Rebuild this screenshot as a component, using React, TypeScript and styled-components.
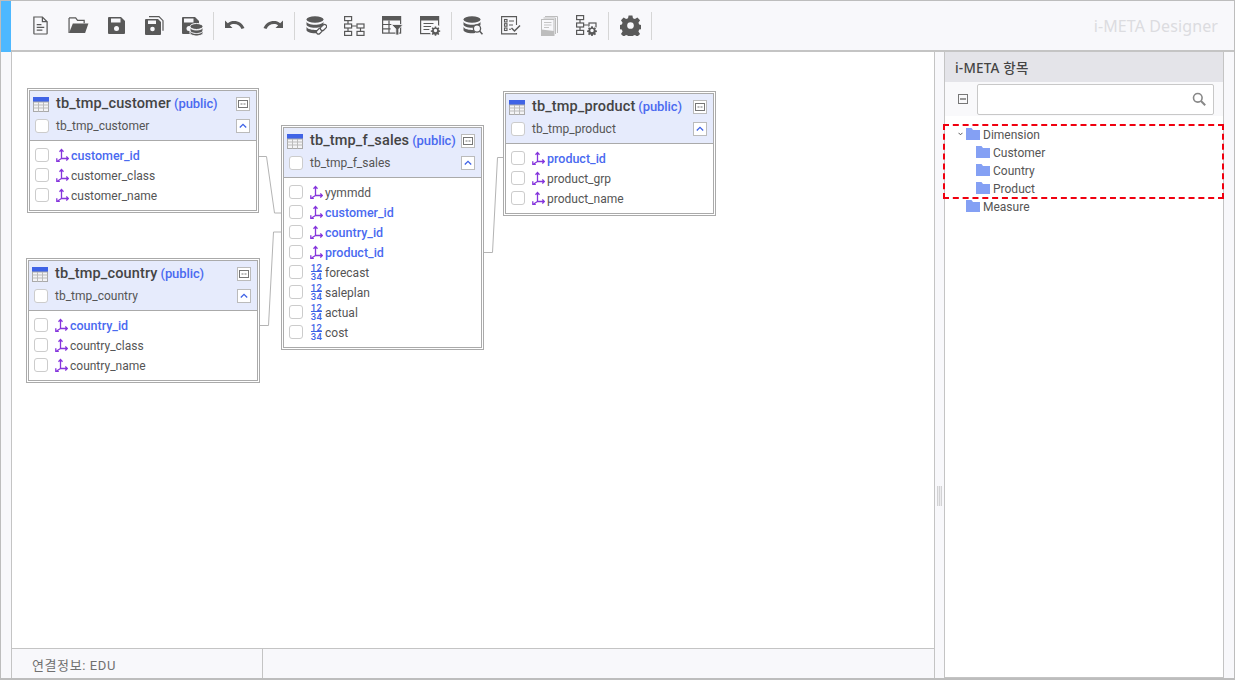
import React from "react";
import styled, { createGlobalStyle } from "styled-components";

const Global = createGlobalStyle`
  html, body { margin: 0; padding: 0; background: #fff; }
  body { font-family: Roboto, "Noto Sans CJK KR", "Noto Sans", sans-serif; font-size: 12px; color: #555; }
  * { box-sizing: border-box; }
`;

const Page = styled.div`
  width: 1235px;
  height: 680px;
  display: flex;
  flex-direction: column;
  background: #f8f8fb;
  border: 1px solid #bdbdbd;
  border-bottom-width: 2px;
  overflow: hidden;
`;

const Toolbar = styled.div`
  height: 51px;
  flex: none;
  display: flex;
  align-items: center;
  border-bottom: 2px solid #c4c4c4;
  position: relative;
  padding-right: 16px;
`;
const Accent = styled.div`
  width: 10px;
  align-self: stretch;
  margin: 0 8px -2px 0;
  background: #4db8ff;
  flex: none;
`;
const ToolGroup = styled.div`
  display: flex;
  align-items: center;
  height: 28px;
  padding: 0 2px;
  border-right: 1px solid #d6d6d6;
`;
const ToolButton = styled.div`
  width: 38px;
  height: 28px;
  display: flex;
  align-items: center;
  justify-content: center;
`;
const Brand = styled.div`
  margin-left: auto;
  font-family: "Noto Sans", sans-serif;
  font-size: 16px;
  color: #dcdce0;
  letter-spacing: 0.1px;
`;

const Body = styled.div`
  flex: 1;
  display: flex;
  min-height: 0;
`;
const Gutter = styled.div`
  width: 10px;
  flex: none;
`;
const Main = styled.div`
  width: 924px;
  flex: none;
  display: flex;
  flex-direction: column;
  border-left: 1px solid #c4c4c4;
  border-right: 1px solid #c4c4c4;
`;
const Canvas = styled.div`
  flex: 1;
  position: relative;
  background: #fff;
`;
const StatusBar = styled.div`
  height: 30px;
  flex: none;
  display: flex;
  border-top: 1px solid #c4c4c4;
  background: #f8f8fb;
`;
const StatusCell = styled.div`
  width: 251px;
  padding: 1px 0 0 20px;
  display: flex;
  align-items: center;
  font-size: 13px;
  letter-spacing: 0.6px;
  color: #707070;
  border-right: 1px solid #c4c4c4;
`;
const Splitter = styled.div`
  width: 9px;
  flex: none;
  display: flex;
  justify-content: center;
  padding-top: 434px;
`;
const Grip = styled.div`
  width: 5px;
  height: 20px;
  background: repeating-linear-gradient(90deg, #d2d2d4 0 1px, #ececee 1px 2px);
`;
const Side = styled.div`
  width: 280px;
  flex: none;
  position: relative;
  background: #fff;
  border: 1px solid #c4c4c4;
  border-top: none;
  display: flex;
  flex-direction: column;
`;
const SideHead = styled.div`
  height: 30px;
  flex: none;
  display: flex;
  align-items: center;
  padding-left: 10px;
  background: #e4e4e9;
  font-family: "Noto Sans", "Noto Sans CJK KR", sans-serif;
  font-size: 13.5px;
  font-weight: 500;
  letter-spacing: 0.2px;
  color: #444;
`;
const SearchRow = styled.div`
  height: 34px;
  flex: none;
  display: flex;
  align-items: center;
  padding: 0 9px 0 13px;
  gap: 9px;
  background: #f9f9fb;
`;
const Collapse = styled.div`
  width: 10px;
  height: 10px;
  border: 1px solid #777;
  position: relative;
  &::after {
    content: "";
    position: absolute;
    left: 1px;
    right: 1px;
    top: 3px;
    height: 2px;
    background: #777;
    transform: scaleY(0.75);
  }
`;
const SearchBox = styled.div`
  flex: 1;
  height: 31px;
  display: flex;
  align-items: center;
  justify-content: flex-end;
  padding-right: 7px;
  background: #fff;
  border: 1px solid #c8c8c8;
  border-radius: 2px;
`;
const Tree = styled.div`
  padding-top: 9px;
  display: flex;
  flex-direction: column;
`;
const TreeRow = styled.div<{ $indent: number }>`
  height: 18px;
  display: flex;
  align-items: center;
  gap: 3px;
  padding-left: ${(p) => p.$indent}px;
  color: #555;
`;
const TreeLabel = styled.span`
  padding-top: 2px;
`;
const Caret = styled.div`
  position: absolute;
  left: 9px;
  top: 73px;
  width: 12px;
  height: 18px;
  display: flex;
  align-items: center;
  justify-content: center;
`;
const Highlight = styled.div`
  position: absolute;
  left: -2px;
  right: -1px;
  top: 72px;
  height: 75px;
  border: 2px dashed #f0000f;
  pointer-events: none;
`;

const Node = styled.div<{ $x: number; $y: number; $w: number; $h: number }>`
  position: absolute;
  left: ${(p) => p.$x}px;
  top: ${(p) => p.$y}px;
  width: ${(p) => p.$w}px;
  height: ${(p) => p.$h}px;
  background: #fff;
  border: 3px double #aaa;
`;
const NodeHead = styled.div`
  height: 50px;
  padding: 2px 6px 0 3px;
  background: #e6ebfc;
  border-bottom: 1px solid #aaa;
  display: flex;
  flex-direction: column;
`;
const TitleRow = styled.div`
  height: 22px;
  display: flex;
  align-items: center;
`;
const Title = styled.div`
  margin-left: 7px;
  margin-top: -1px;
  font-size: 14.5px;
  font-weight: 500;
  letter-spacing: 0.13px;
  color: #444;
  white-space: nowrap;
`;
const Schema = styled.span`
  margin-left: 3px;
  font-size: 13px;
  color: #4a6af0;
  font-weight: 500;
  letter-spacing: -0.1px;
`;
const AliasRow = styled.div`
  height: 22px;
  display: flex;
  align-items: center;
  padding-left: 2px;
  color: #555;
`;
const AliasText = styled.span`
  margin-left: 7px;
`;
const SmallBtn = styled.div`
  margin-left: auto;
  width: 14px;
  height: 14px;
  flex: none;
  background: #fff;
  border: 1px solid #bbb;
  display: flex;
  align-items: center;
  justify-content: center;
`;
const Check = styled.div`
  width: 14px;
  height: 14px;
  flex: none;
  background: #fff;
  border: 1px solid #ccc;
  border-radius: 3px;
`;
const Rows = styled.div`
  padding: 4px 0 0 5px;
  display: flex;
  flex-direction: column;
`;
const Row = styled.div`
  height: 20px;
  display: flex;
  align-items: center;
`;
const RowIcon = styled.div`
  margin-left: 7px;
  width: 13px;
  height: 14px;
  flex: none;
  display: flex;
  align-items: center;
  justify-content: center;
`;
const RowName = styled.span<{ $key?: boolean }>`
  margin-left: 2px;
  padding-top: ${(p) => (p.$key ? 0 : 2)}px;
  color: ${(p) => (p.$key ? "#4a6af0" : "#555")};
  font-size: ${(p) => (p.$key ? 12.5 : 12)}px;
  font-weight: ${(p) => (p.$key ? 500 : 400)};
  white-space: nowrap;
`;
const NumGlyph = styled.div`
  display: flex;
  flex-direction: column;
  align-items: center;
  font-size: 9.5px;
  line-height: 7px;
  font-weight: 500;
  letter-spacing: 0.4px;
  color: #3f63e6;
  & > span:first-child {
    border-bottom: 1px solid #3f63e6;
    margin-bottom: 1px;
  }
`;
const Wires = styled.svg`
  position: absolute;
  left: 0;
  top: 0;
  width: 100%;
  height: 100%;
  pointer-events: none;
`;
const TableIcon = styled.svg`
  flex: none;
`;

const G = "#595959";

const DocLines = () => (
  <svg width="17" height="19" viewBox="0 0 18 20" fill="none" stroke={G} strokeWidth="1.3">
    <path d="M2 1h9l5 5v12.500a.5.5 0 0 1-.5.5h-13a.5.5 0 0 1-.5-.5V1.500z" />
    <path d="M11 1v5h5" />
    <path d="M5 9h5M5 12h8M5 15h6" />
  </svg>
);
const Folder = () => (
  <svg width="21" height="17" viewBox="0 0 22 18">
    <path d="M1 1h7l2 2.500h7v3" fill="none" stroke={G} strokeWidth="1.3" />
    <path d="M1 1v16" stroke={G} strokeWidth="1.3" />
    <path d="M5 7h16.500L18 17H1z" fill={G} />
  </svg>
);
const saveBody = "M1 2a1 1 0 0 1 1-1h12l4 4v12a1 1 0 0 1-1 1H2a1 1 0 0 1-1-1z";
const Save = () => (
  <svg width="19" height="19" viewBox="0 0 19 19">
    <path d={saveBody} fill={G} />
    <rect x="4" y="2.500" width="9.500" height="4" fill="#f8f8fb" />
    <circle cx="9.500" cy="12.500" r="2.500" fill="#f8f8fb" />
  </svg>
);
const SaveAll = () => (
  <svg width="20" height="19" viewBox="0 0 20 19">
    <path d="M5 .7h10l4 4v10" fill="none" stroke={G} strokeWidth="1.2" />
    <path d="M3 3h11l3 3v12a1 1 0 0 1-1 1H2a1 1 0 0 1-1-1V4a1 1 0 0 1 1-1z" fill={G} />
    <rect x="4" y="4.500" width="8" height="3.500" fill="#f8f8fb" />
    <circle cx="8.500" cy="13" r="2.300" fill="#f8f8fb" />
  </svg>
);
const SaveDb = () => (
  <svg width="22" height="20" viewBox="0 0 22 20">
    <path d={saveBody} fill={G} />
    <rect x="3" y="2.500" width="9.500" height="4" fill="#f8f8fb" />
    <circle cx="8" cy="12.500" r="2.500" fill="#f8f8fb" />
    <ellipse cx="15.500" cy="10.500" rx="6.500" ry="3" fill={G} stroke="#f8f8fb" />
    <path d="M9 11v6c0 1.600 3 3 6.500 3s6.500-1.400 6.500-3v-6c0 1.600-3 3-6.500 3S9 12.600 9 11z" fill={G} stroke="#f8f8fb" />
    <path d="M9 14.500c0 1.600 3 3 6.500 3s6.500-1.400 6.500-3" fill="none" stroke="#f8f8fb" />
  </svg>
);
const undoPath = "M0 .5v7.500h7.500L4.800 5.300C6 4.400 7.500 4 9 4c3.500 0 6 1.800 7.500 5l3-1C17.500 3.500 13.800 1 9 1 6.800 1 4.600 1.600 2.800 3.300z";
const Undo = () => (
  <svg width="20" height="12" viewBox="0 0 20 12">
    <path d={undoPath} fill={G} />
  </svg>
);
const Redo = () => (
  <svg width="20" height="12" viewBox="0 0 20 12">
    <path d={undoPath} fill={G} transform="matrix(-1 0 0 1 20 0)" />
  </svg>
);
const DbStack = () => (
  <>
    <ellipse cx="9" cy="3.500" rx="8.500" ry="3.200" fill={G} />
    <path d="M.5 5.500v3c0 1.800 3.800 3.200 8.500 3.200s8.500-1.400 8.500-3.200v-3C17.500 7.300 13.700 8.700 9 8.700S.5 7.300.5 5.500z" fill={G} />
    <path d="M.5 10.500v3.500c0 1.800 3.800 3.200 8.500 3.200 1 0 2-.1 3-.2V13.700c-1 .2-2 .2-3 .2-4.700 0-8.500-1.500-8.500-3.400z" fill={G} />
  </>
);
const DbLink = () => (
  <svg width="21" height="20" viewBox="0 0 21 20">
    <DbStack />
    <g fill="#f8f8fb" stroke={G} strokeWidth="1.2">
      <rect x="10" y="13" width="7" height="4" rx="2" transform="rotate(-45 13.500 15)" />
      <rect x="14" y="9.500" width="7" height="4" rx="2" transform="rotate(-45 17.500 11.500)" />
    </g>
  </svg>
);
const TreeBoxes = () => (
  <g fill="none" stroke={G} strokeWidth="1.2">
    <rect x=".6" y=".6" width="7" height="4" />
    <rect x=".6" y="8" width="7" height="4" />
    <rect x=".6" y="15.400" width="7" height="4" />
    <path d="M4 4.600V8M4 12v3.400M7.600 10h5" />
  </g>
);
const TreeIcon = () => (
  <svg width="21" height="20" viewBox="0 0 21 20">
    <TreeBoxes />
    <g fill="none" stroke={G} strokeWidth="1.2">
      <rect x="13" y="8" width="7" height="4" />
      <rect x="13" y="15.400" width="7" height="4" />
      <path d="M16.500 12v3.400" />
    </g>
  </svg>
);
const cogPath =
  "M-1.500-10h3l.5 2.600 1.700.7 2.200-1.500 2.100 2.100-1.500 2.200.7 1.700 2.600.5v3l-2.600.5-.7 1.700 1.500 2.200-2.100 2.100-2.200-1.500-1.700.7-.5 2.600h-3l-.5-2.600-1.700-.7-2.200 1.500-2.100-2.100 1.500-2.200-.7-1.700-2.600-.5v-3l2.600-.5.7-1.700-1.500-2.200 2.100-2.100 2.200 1.500 1.700-.7zM0-5a3.500 3.500 0 1 0 0 7 3.500 3.500 0 0 0 0-7z";
const Cog = ({ x, y, s }: { x: number; y: number; s: number }) => (
  <g transform={`translate(${x} ${y}) scale(${s})`}>
    <path fill={G} fillRule="evenodd" d={cogPath} transform="translate(0 1.500)" />
  </g>
);
const TableFilter = () => (
  <svg width="21" height="19" viewBox="0 0 21 19">
    <rect x=".6" y=".6" width="18" height="16.500" fill="none" stroke={G} strokeWidth="1.2" />
    <rect y="0" width="19" height="4.500" fill={G} />
    <path d="M.6 8.500h10M.6 12.800h8M7 4.500v12.500" stroke={G} strokeWidth="1.200" />
    <path d="M9.500 8.500H21l-4.200 4.500v6h-3v-6z" fill={G} stroke="#f8f8fb" strokeWidth=".8" />
  </svg>
);
const DocGear = () => (
  <svg width="21" height="20" viewBox="0 0 21 20">
    <rect x=".6" y=".6" width="18" height="17" fill="none" stroke={G} strokeWidth="1.2" />
    <rect width="19" height="4.500" fill={G} />
    <path d="M3.500 7.500h10M3.500 10.500h8M3.500 13.500h6" stroke={G} strokeWidth="1.200" />
    <circle cx="15.500" cy="14.500" r="6" fill="#f8f8fb" />
    <Cog x={15.500} y={14.500} s={0.48} />
  </svg>
);
const DbSearch = () => (
  <svg width="20" height="19" viewBox="0 0 20 19">
    <DbStack />
    <circle cx="14" cy="12.500" r="3.600" fill="#f8f8fb" stroke={G} strokeWidth="1.300" />
    <path d="M16.500 15l3 3.300" stroke={G} strokeWidth="1.600" />
  </svg>
);
const CheckList = () => (
  <svg width="20" height="19" viewBox="0 0 20 19" fill="none" stroke={G} strokeWidth="1.100">
    <path d="M15.500 9V.6H.6v17.300h14.900v-1" />
    <rect x="3.500" y="3.500" width="2.500" height="2.500" />
    <rect x="3.500" y="7.700" width="2.500" height="2.500" />
    <rect x="3.500" y="12" width="2.500" height="2.500" />
    <path d="M8 5h5M8 9h4M8 13.300h2" />
    <path d="M10.500 12l3 3 5.500-5.500" strokeWidth="1.500" />
  </svg>
);
const DocStack = () => (
  <svg width="17" height="20" viewBox="0 0 17 20">
    <path d="M4 .5h12.500V17" fill="none" stroke="#bdbdbd" />
    <path d="M2.500 2h12v16" fill="none" stroke="#bdbdbd" />
    <rect x=".5" y="3.500" width="12.500" height="16" fill="#f8f8fb" stroke="#bdbdbd" />
    <path d="M3 6.500h7.500M3 9h7.500M3 11.500h5" stroke="#c4c4c4" />
    <path d="M.5 13.500l12.500 1.500v4.500H.5z" fill="#bdbdbd" />
  </svg>
);
const TreeGear = () => (
  <svg width="22" height="21" viewBox="0 0 22 21">
    <TreeBoxes />
    <g fill="none" stroke={G} strokeWidth="1.2">
      <rect x="13" y="8" width="7" height="4" />
    </g>
    <circle cx="16" cy="16" r="5.500" fill="#f8f8fb" />
    <Cog x={16} y={15.500} s={0.5} />
  </svg>
);
const Gear = () => (
  <svg width="21" height="21" viewBox="-11 -11 22 22">
    <path
      fill={G}
      fillRule="evenodd"
      d="M-2-10.500h4l.6 3 2 .8 2.600-1.700 2.800 2.800-1.700 2.600.8 2 3 .6v4l-3 .6-.8 2 1.700 2.600-2.800 2.800-2.600-1.700-2 .8-.6 3h-4l-.6-3-2-.8-2.600 1.700-2.800-2.800 1.700-2.600-.8-2-3-.6v-4l3-.6.8-2-1.700-2.600 2.800-2.800 2.600 1.700 2-.8zM0-3.500a3.500 3.500 0 1 0 0 7 3.500 3.500 0 0 0 0-7z"
    />
  </svg>
);

const TableGlyph = () => (
  <TableIcon width="16" height="15" viewBox="0 0 16 15">
    <rect width="16" height="5" fill="#3f63e6" />
    <rect x=".5" y="5" width="15" height="9.500" fill="#f4f4f6" stroke="#aaa" />
    <path d="M5.500 5v9.500M10.500 5v9.500M.5 8h15M.5 11h15" stroke="#bbb" />
  </TableIcon>
);
const KeyGlyph = () => (
  <svg width="13" height="14" viewBox="0 0 13 14" fill="none" stroke="#8535dc" strokeWidth="1.300">
    <path d="M5.500 2v8.500h6.500M5.500 10.500L1.500 13" />
    <path d="M3.500 3.700l2-2.200 2 2.200M10.300 8.500l2 2-2 2" />
    <path d="M.8 10.300v3h3" />
  </svg>
);
const NumberGlyph = () => (
  <NumGlyph>
    <span>12</span>
    <span>34</span>
  </NumGlyph>
);
const CardGlyph = () => (
  <svg width="10" height="8" viewBox="0 0 10 8" fill="none">
    <rect x=".5" y=".5" width="9" height="7" stroke="#777" />
    <path d="M2.500 4h2M5.500 4h2" stroke="#777" />
  </svg>
);
const ChevUp = () => (
  <svg width="8" height="6" viewBox="0 0 8 6" fill="none">
    <path d="M.8 4.500L4 1.300l3.200 3.200" stroke="#3f63e6" strokeWidth="1.300" />
  </svg>
);
const FolderGlyph = () => (
  <svg width="14" height="12" viewBox="0 0 14 12">
    <path d="M0 0h5.500l1.500 2h7v10H0z" fill="#84a0f4" />
  </svg>
);

type Col = { name: string; kind: "key" | "fk" | "num" };
type TableDef = { name: string; x: number; y: number; w: number; h: number; cols: Col[] };

const tables: TableDef[] = [
  {
    name: "tb_tmp_customer", x: 15, y: 36, w: 232, h: 125,
    cols: [
      { name: "customer_id", kind: "key" },
      { name: "customer_class", kind: "fk" },
      { name: "customer_name", kind: "fk" },
    ],
  },
  {
    name: "tb_tmp_f_sales", x: 269, y: 73, w: 203, h: 225,
    cols: [
      { name: "yymmdd", kind: "fk" },
      { name: "customer_id", kind: "key" },
      { name: "country_id", kind: "key" },
      { name: "product_id", kind: "key" },
      { name: "forecast", kind: "num" },
      { name: "saleplan", kind: "num" },
      { name: "actual", kind: "num" },
      { name: "cost", kind: "num" },
    ],
  },
  {
    name: "tb_tmp_product", x: 491, y: 39, w: 213, h: 125,
    cols: [
      { name: "product_id", kind: "key" },
      { name: "product_grp", kind: "fk" },
      { name: "product_name", kind: "fk" },
    ],
  },
  {
    name: "tb_tmp_country", x: 14, y: 206, w: 234, h: 125,
    cols: [
      { name: "country_id", kind: "key" },
      { name: "country_class", kind: "fk" },
      { name: "country_name", kind: "fk" },
    ],
  },
];

const toolGroups = [
  [<DocLines />, <Folder />, <Save />, <SaveAll />, <SaveDb />],
  [<Undo />, <Redo />],
  [<DbLink />, <TreeIcon />, <TableFilter />, <DocGear />],
  [<DbSearch />, <CheckList />, <DocStack />, <TreeGear />],
  [<Gear />],
];

const treeItems = [
  { label: "Dimension", indent: 21 },
  { label: "Customer", indent: 31 },
  { label: "Country", indent: 31 },
  { label: "Product", indent: 31 },
  { label: "Measure", indent: 21 },
];

function TableNode({ t }: { t: TableDef }) {
  return (
    <Node $x={t.x} $y={t.y} $w={t.w} $h={t.h}>
      <NodeHead>
        <TitleRow>
          <TableGlyph />
          <Title>
            {t.name}
            <Schema>(public)</Schema>
          </Title>
          <SmallBtn>
            <CardGlyph />
          </SmallBtn>
        </TitleRow>
        <AliasRow>
          <Check />
          <AliasText>{t.name}</AliasText>
          <SmallBtn>
            <ChevUp />
          </SmallBtn>
        </AliasRow>
      </NodeHead>
      <Rows>
        {t.cols.map((c) => (
          <Row key={c.name}>
            <Check />
            <RowIcon>{c.kind === "num" ? <NumberGlyph /> : <KeyGlyph />}</RowIcon>
            <RowName $key={c.kind === "key"}>{c.name}</RowName>
          </Row>
        ))}
      </Rows>
    </Node>
  );
}

export default function App() {
  return (
    <>
      <Global />
      <Page>
        <Toolbar>
          <Accent />
          {toolGroups.map((group, i) => (
            <ToolGroup key={i}>
              {group.map((icon, j) => (
                <ToolButton key={j}>{icon}</ToolButton>
              ))}
            </ToolGroup>
          ))}
          <Brand>i-META Designer</Brand>
        </Toolbar>
        <Body>
          <Gutter />
          <Main>
            <Canvas>
              <Wires>
                <g fill="none" stroke="#b4b4b4" strokeWidth="1">
                  <path d="M245 104.500h9.500l8 56.500h8" />
                  <path d="M246 273.500h10.500l5-93.500h8.500" />
                  <path d="M471 200.500h9.500l5-95h7" />
                </g>
              </Wires>
              {tables.map((t) => (
                <TableNode key={t.name} t={t} />
              ))}
            </Canvas>
            <StatusBar>
              <StatusCell>연결정보: EDU</StatusCell>
            </StatusBar>
          </Main>
          <Splitter>
            <Grip />
          </Splitter>
          <Side>
            <SideHead>i-META 항목</SideHead>
            <SearchRow>
              <Collapse />
              <SearchBox>
                <svg width="14" height="14" viewBox="0 0 14 14" fill="none" stroke="#888" strokeWidth="1.600">
                  <circle cx="5.800" cy="5.800" r="4.300" />
                  <path d="M9 9l4.200 4.200" strokeWidth="2" />
                </svg>
              </SearchBox>
            </SearchRow>
            <Tree>
              {treeItems.map((item) => (
                <TreeRow key={item.label} $indent={item.indent}>
                  <FolderGlyph />
                  <TreeLabel>{item.label}</TreeLabel>
                </TreeRow>
              ))}
            </Tree>
            <Caret>
              <svg width="5" height="4" viewBox="0 0 5 4" fill="none">
                <path d="M.5.800L2.500 2.800 4.500.800" stroke="#555" />
              </svg>
            </Caret>
            <Highlight />
          </Side>
        </Body>
      </Page>
    </>
  );
}
